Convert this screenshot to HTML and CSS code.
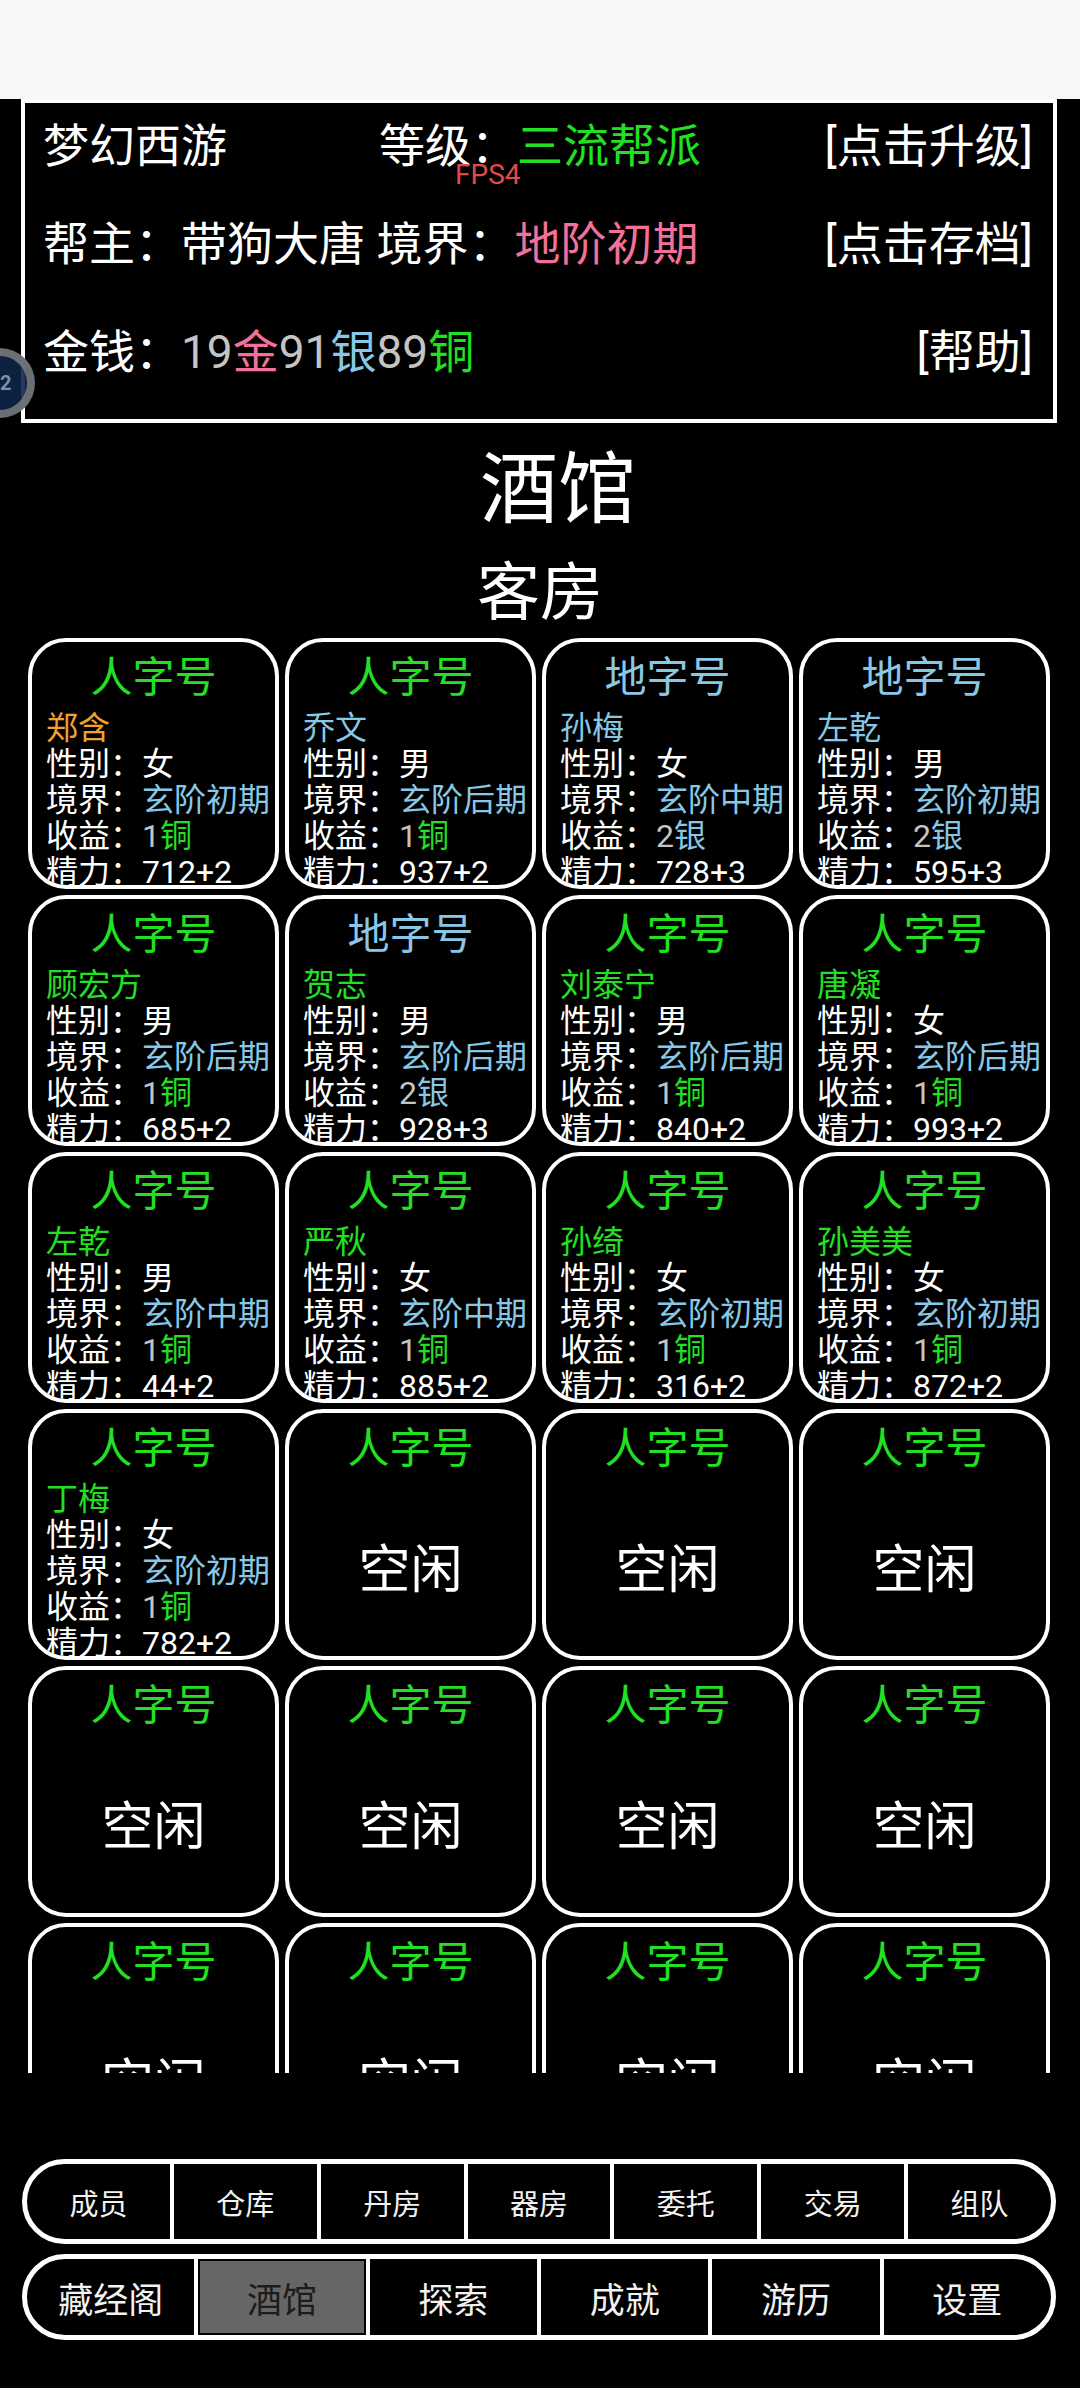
FILE: index.html
```html
<!DOCTYPE html>
<html lang="zh">
<head>
    <meta charset="UTF-8">
    <meta name="viewport" content="width=device-width, initial-scale=1.0">
    <title>酒馆 - 梦幻西游</title>
    <link rel="stylesheet" href="styles.css">
</head>
<body>
    <div class="status-bar"></div>

    <div class="header">
        <div class="header-row row-1">
            <span class="col-name">梦幻西游</span>
            <span class="col-mid">等级：<span class="green">三流帮派</span></span>
            <span class="col-right">[点击升级]</span>
        </div>
        <div class="header-row row-2">
            <span class="col-wide">帮主：带狗大唐 境界：<span class="pink">地阶初期</span></span>
            <span class="col-right">[点击存档]</span>
        </div>
        <div class="header-row row-3">
            <span class="col-wide">金钱：<span class="gray">19</span><span class="pink">金</span><span class="gray">91</span><span class="blue">银</span><span class="gray">89</span><span class="green">铜</span></span>
            <span class="col-right">[帮助]</span>
        </div>
        <div class="fps">FPS4</div>
    </div>

    <div class="float-ball">22</div>

    <div class="scroll">
        <h1 class="page-title">酒馆</h1>
        <h2 class="sub-title">客房</h2>

        <div class="room-grid">
            <div class="room">
                <div class="room-type green">人字号</div>
                <div class="line orange">郑含</div>
                <div class="line">性别：女</div>
                <div class="line">境界：<span class="blue">玄阶初期</span></div>
                <div class="line">收益：<span class="gray">1</span><span class="green">铜</span></div>
                <div class="line">精力：712+2</div>
            </div>
            <div class="room">
                <div class="room-type green">人字号</div>
                <div class="line blue">乔文</div>
                <div class="line">性别：男</div>
                <div class="line">境界：<span class="blue">玄阶后期</span></div>
                <div class="line">收益：<span class="gray">1</span><span class="green">铜</span></div>
                <div class="line">精力：937+2</div>
            </div>
            <div class="room">
                <div class="room-type blue">地字号</div>
                <div class="line blue">孙梅</div>
                <div class="line">性别：女</div>
                <div class="line">境界：<span class="blue">玄阶中期</span></div>
                <div class="line">收益：<span class="gray">2</span><span class="blue">银</span></div>
                <div class="line">精力：728+3</div>
            </div>
            <div class="room">
                <div class="room-type blue">地字号</div>
                <div class="line blue">左乾</div>
                <div class="line">性别：男</div>
                <div class="line">境界：<span class="blue">玄阶初期</span></div>
                <div class="line">收益：<span class="gray">2</span><span class="blue">银</span></div>
                <div class="line">精力：595+3</div>
            </div>

            <div class="room">
                <div class="room-type green">人字号</div>
                <div class="line green">顾宏方</div>
                <div class="line">性别：男</div>
                <div class="line">境界：<span class="blue">玄阶后期</span></div>
                <div class="line">收益：<span class="gray">1</span><span class="green">铜</span></div>
                <div class="line">精力：685+2</div>
            </div>
            <div class="room">
                <div class="room-type blue">地字号</div>
                <div class="line green">贺志</div>
                <div class="line">性别：男</div>
                <div class="line">境界：<span class="blue">玄阶后期</span></div>
                <div class="line">收益：<span class="gray">2</span><span class="blue">银</span></div>
                <div class="line">精力：928+3</div>
            </div>
            <div class="room">
                <div class="room-type green">人字号</div>
                <div class="line green">刘泰宁</div>
                <div class="line">性别：男</div>
                <div class="line">境界：<span class="blue">玄阶后期</span></div>
                <div class="line">收益：<span class="gray">1</span><span class="green">铜</span></div>
                <div class="line">精力：840+2</div>
            </div>
            <div class="room">
                <div class="room-type green">人字号</div>
                <div class="line green">唐凝</div>
                <div class="line">性别：女</div>
                <div class="line">境界：<span class="blue">玄阶后期</span></div>
                <div class="line">收益：<span class="gray">1</span><span class="green">铜</span></div>
                <div class="line">精力：993+2</div>
            </div>

            <div class="room">
                <div class="room-type green">人字号</div>
                <div class="line green">左乾</div>
                <div class="line">性别：男</div>
                <div class="line">境界：<span class="blue">玄阶中期</span></div>
                <div class="line">收益：<span class="gray">1</span><span class="green">铜</span></div>
                <div class="line">精力：44+2</div>
            </div>
            <div class="room">
                <div class="room-type green">人字号</div>
                <div class="line green">严秋</div>
                <div class="line">性别：女</div>
                <div class="line">境界：<span class="blue">玄阶中期</span></div>
                <div class="line">收益：<span class="gray">1</span><span class="green">铜</span></div>
                <div class="line">精力：885+2</div>
            </div>
            <div class="room">
                <div class="room-type green">人字号</div>
                <div class="line green">孙绮</div>
                <div class="line">性别：女</div>
                <div class="line">境界：<span class="blue">玄阶初期</span></div>
                <div class="line">收益：<span class="gray">1</span><span class="green">铜</span></div>
                <div class="line">精力：316+2</div>
            </div>
            <div class="room">
                <div class="room-type green">人字号</div>
                <div class="line green">孙美美</div>
                <div class="line">性别：女</div>
                <div class="line">境界：<span class="blue">玄阶初期</span></div>
                <div class="line">收益：<span class="gray">1</span><span class="green">铜</span></div>
                <div class="line">精力：872+2</div>
            </div>

            <div class="room">
                <div class="room-type green">人字号</div>
                <div class="line green">丁梅</div>
                <div class="line">性别：女</div>
                <div class="line">境界：<span class="blue">玄阶初期</span></div>
                <div class="line">收益：<span class="gray">1</span><span class="green">铜</span></div>
                <div class="line">精力：782+2</div>
            </div>
            <div class="room empty"><div class="room-type green">人字号</div><div class="idle">空闲</div></div>
            <div class="room empty"><div class="room-type green">人字号</div><div class="idle">空闲</div></div>
            <div class="room empty"><div class="room-type green">人字号</div><div class="idle">空闲</div></div>

            <div class="room empty"><div class="room-type green">人字号</div><div class="idle">空闲</div></div>
            <div class="room empty"><div class="room-type green">人字号</div><div class="idle">空闲</div></div>
            <div class="room empty"><div class="room-type green">人字号</div><div class="idle">空闲</div></div>
            <div class="room empty"><div class="room-type green">人字号</div><div class="idle">空闲</div></div>

            <div class="room empty"><div class="room-type green">人字号</div><div class="idle">空闲</div></div>
            <div class="room empty"><div class="room-type green">人字号</div><div class="idle">空闲</div></div>
            <div class="room empty"><div class="room-type green">人字号</div><div class="idle">空闲</div></div>
            <div class="room empty"><div class="room-type green">人字号</div><div class="idle">空闲</div></div>
        </div>
    </div>

    <div class="nav">
        <div class="nav-bar small">
            <div class="nav-item">成员</div>
            <div class="nav-item">仓库</div>
            <div class="nav-item">丹房</div>
            <div class="nav-item">器房</div>
            <div class="nav-item">委托</div>
            <div class="nav-item">交易</div>
            <div class="nav-item">组队</div>
        </div>
        <div class="nav-bar">
            <div class="nav-item">藏经阁</div>
            <div class="nav-item active">酒馆</div>
            <div class="nav-item">探索</div>
            <div class="nav-item">成就</div>
            <div class="nav-item">游历</div>
            <div class="nav-item">设置</div>
        </div>
    </div>
</body>
</html>
```

FILE: styles.css
```css
body {
    margin: 0;
    width: 1080px;
    height: 2388px;
    overflow: hidden;
    background-color: #000;
    color: #fff;
    font-family: Roboto, "Noto Sans CJK SC", sans-serif;
    position: relative;
}
.status-bar {
    height: 99px;
    background-color: #f8f8f8;
}

/* top info box */
.header {
    position: relative;
    box-sizing: border-box;
    height: 324px;
    margin: 0 23px 0 21px;
    padding: 0 20px 0 18px;
    border: 4px solid #fff;
    font-size: 46px;
}
.header-row {
    display: flex;
    align-items: center;
    height: 80px;
    white-space: nowrap;
}
.row-1 {
    margin-top: -1px;
}
.row-2 {
    margin-top: 18px;
}
.row-3 {
    margin-top: 28px;
}
.col-name {
    width: 336px;
}
.col-right {
    margin-left: auto;
}
.fps {
    position: absolute;
    left: 430px;
    top: 57px;
    font-size: 28px;
    line-height: 30px;
    color: #e04a4a;
}
.float-ball {
    position: absolute;
    left: -35px;
    top: 348px;
    width: 70px;
    height: 70px;
    box-sizing: border-box;
    border: 8px solid rgba(125, 125, 125, 0.85);
    border-radius: 50%;
    background-color: rgba(14, 38, 72, 0.9);
    color: #7f8ea0;
    font-size: 20px;
    font-weight: bold;
    line-height: 54px;
    text-align: center;
}

.green { color: #22e022; }
.blue { color: #88c8e6; }
.pink { color: #f27099; }
.orange { color: #f2a12e; }
.gray { color: #c4c4c4; }

/* tavern */
.scroll {
    height: 1650px;
    overflow: hidden;
}
.page-title {
    margin: 23px 0 0;
    padding-left: 36px;
    font-size: 78px;
    font-weight: normal;
    line-height: 90px;
    text-align: center;
}
.sub-title {
    margin: 22px 0 0;
    font-size: 63px;
    font-weight: normal;
    line-height: 70px;
    text-align: center;
}
.room-grid {
    display: grid;
    grid-template-columns: repeat(4, 251px);
    grid-auto-rows: 251px;
    gap: 6px;
    margin-top: 10px;
    padding-left: 28px;
}
.room {
    display: flex;
    flex-direction: column;
    box-sizing: border-box;
    padding-top: 8px;
    border: 4px solid #fff;
    border-radius: 38px;
    overflow: hidden;
}
.room-type {
    margin-bottom: 4px;
    font-size: 42px;
    line-height: 56px;
    text-align: center;
}
.line {
    padding-left: 14px;
    font-size: 32px;
    line-height: 36px;
    white-space: nowrap;
}
.idle {
    flex: 1;
    display: flex;
    align-items: center;
    justify-content: center;
    padding-bottom: 6px;
    font-size: 52px;
}

/* bottom menus */
.nav {
    margin: 86px 24px 0 22px;
}
.nav-bar {
    display: flex;
    height: 86px;
    box-sizing: border-box;
    border: 5px solid #fff;
    border-radius: 43px;
    overflow: hidden;
    margin-bottom: 10px;
    font-size: 35px;
}
.nav-bar.small {
    height: 85px;
    font-size: 29px;
}
.nav-item {
    flex: 1;
    display: flex;
    align-items: center;
    justify-content: center;
    color: #f2f2f2;
    border-left: 4px solid #fff;
}
.nav-item:first-child {
    border-left: none;
}
.nav-item.active {
    background-color: #666;
    color: #1c1c1c;
    box-shadow: inset 0 0 0 2px #000;
}
```
